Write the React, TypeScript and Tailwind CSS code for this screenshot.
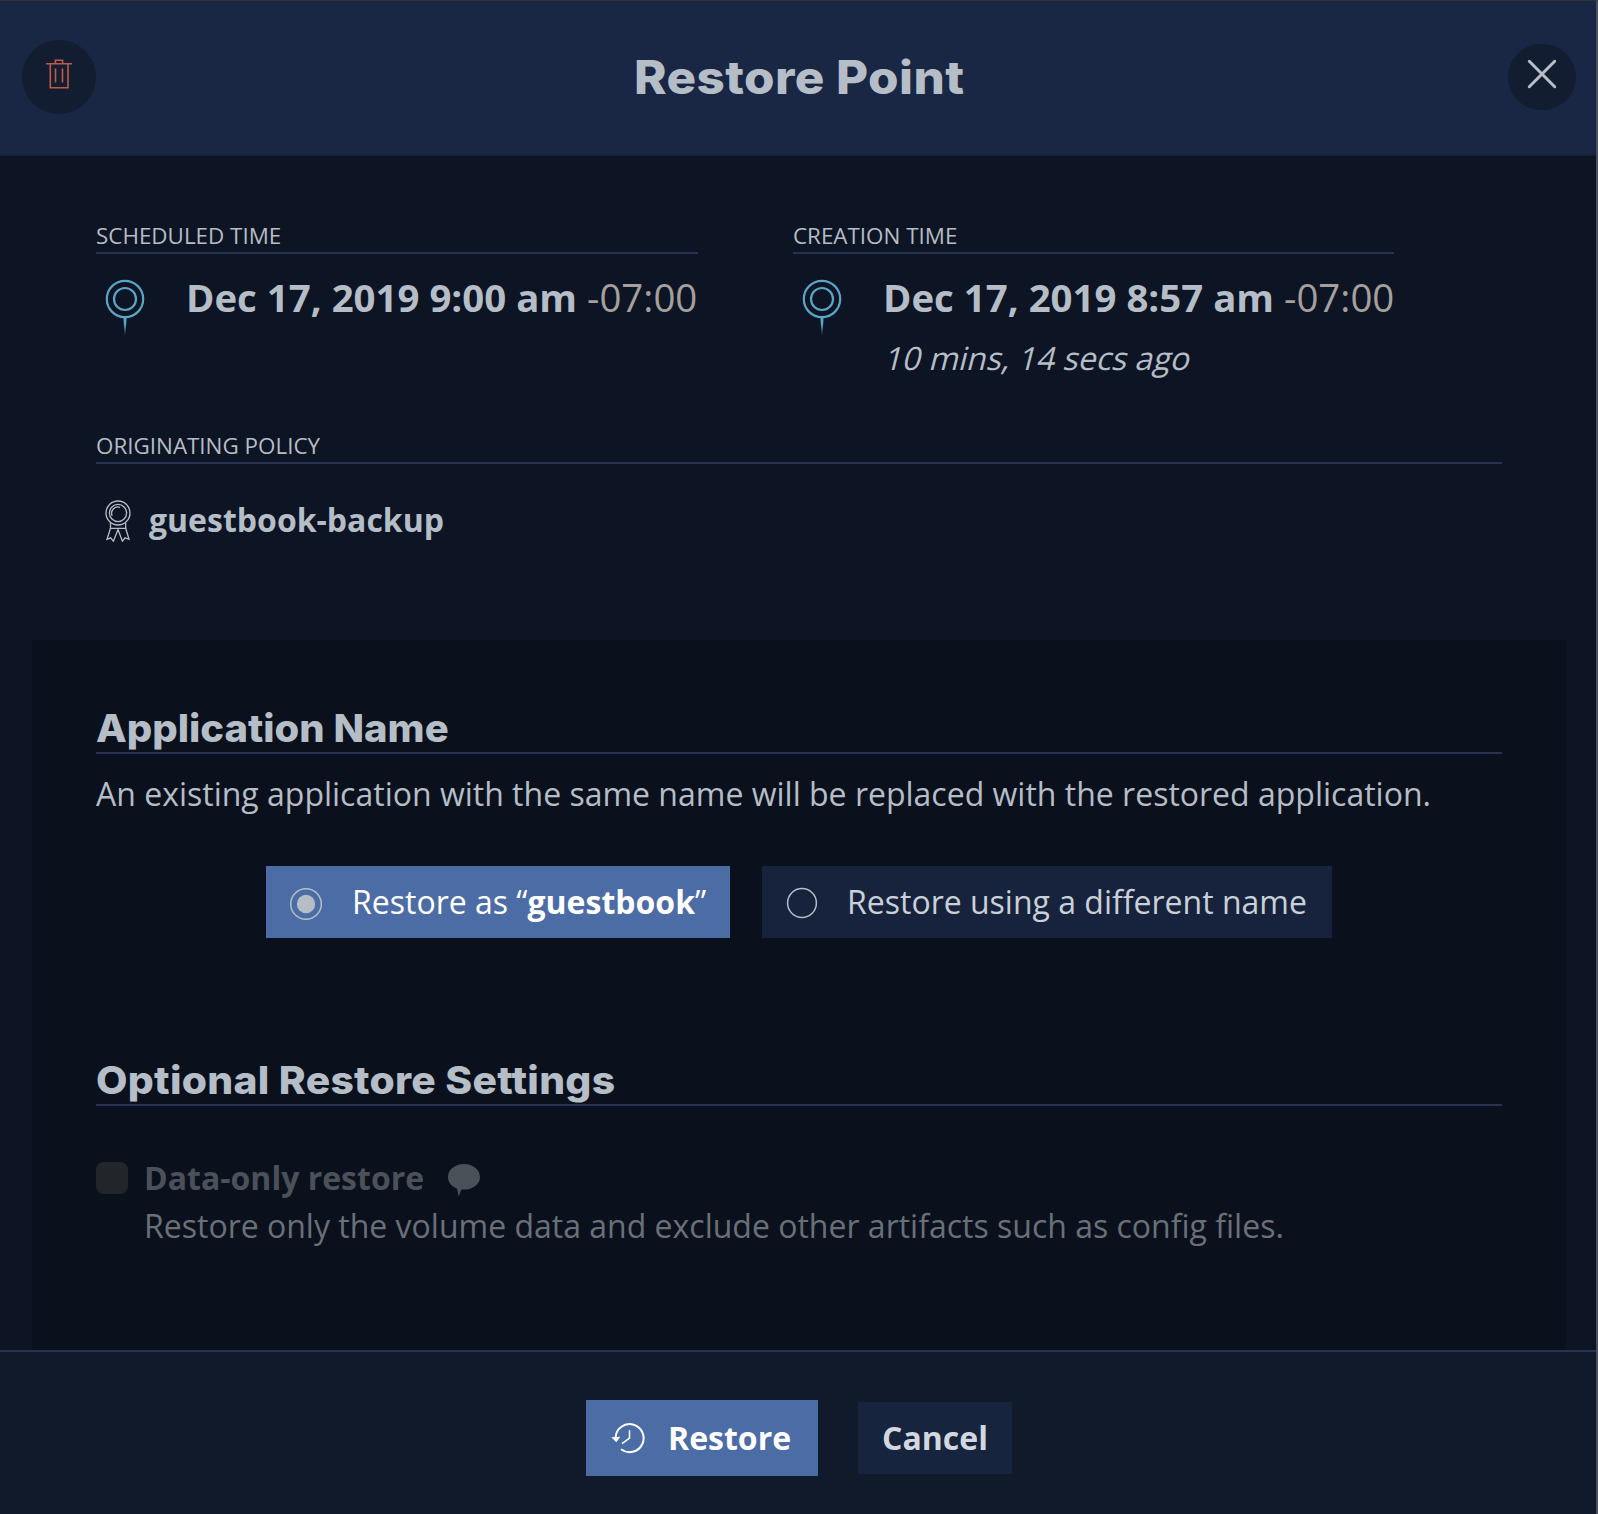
import React from "react";

function TrashIcon() {
  return (
    <svg width="26" height="30" viewBox="0 0 26 30" fill="none" stroke="#c05a48" strokeWidth="1.6">
      <path d="M0 4.7H26M9.4 4.5V1.2H16.6V4.5M4.3 4.7V28.8H22V4.7" />
      <path d="M9.5 9.5V23.5M16.5 9.5V23.5" />
    </svg>
  );
}

function CloseIcon() {
  return (
    <svg width="30" height="30" viewBox="0 0 30 30" stroke="#b9bec9" strokeWidth="3" strokeLinecap="round">
      <path d="M2.3 2.3L27.7 27.7M27.7 2.3L2.3 27.7" />
    </svg>
  );
}

function PinIcon({ id }: { id: string }) {
  return (
    <svg width="40" height="58" viewBox="0 0 40 58" fill="none" className="block">
      <defs>
        <linearGradient id={id} x1="0" y1="37" x2="0" y2="57" gradientUnits="userSpaceOnUse">
          <stop offset="0" stopColor="#5ba6c6" />
          <stop offset="0.4" stopColor="#5ba6c6" />
          <stop offset="1" stopColor="#5ba6c6" stopOpacity="0" />
        </linearGradient>
      </defs>
      <circle cx="20" cy="20" r="18.2" stroke="#5ba6c6" strokeWidth="2.2" />
      <circle cx="20" cy="20" r="11" stroke="#5ba6c6" strokeWidth="2.2" />
      <path d="M18.4 37.5H21.6L20.5 57H19.5Z" fill={`url(#${id})`} />
    </svg>
  );
}

function RibbonIcon() {
  return (
    <svg width="26" height="42" viewBox="0 0 26 42" fill="none" stroke="#b5bdc6" strokeWidth="1.3">
      <circle cx="13" cy="13" r="12" />
      <circle cx="13" cy="13" r="8.6" />
      <path d="M7.2 15.8A6.2 6.2 0 0 1 15 7.4" />
      <path d="M5.5 23V28.3H20.7V23" />
      <path d="M5.5 28.3L2 39.3L5.6 37.8L8.4 41.2L13 29.5L17.4 41.2L20 37.8L24 39.3L20.7 28.3" />
    </svg>
  );
}

function BubbleIcon() {
  return (
    <svg width="32" height="33" viewBox="0 0 32 33" fill="#4a5159" className="block">
      <path d="M16 0C24.8 0 32 5.6 32 12.9S24.8 25.6 16 25.6C15 25.6 14.2 25.6 13.4 25.4L10.7 32.5L9 24.4C3.6 22.4 0 18.2 0 12.9C0 5.6 7.2 0 16 0Z" />
    </svg>
  );
}

function RadioIcon({ checked }: { checked?: boolean }) {
  return (
    <svg width="32" height="32" viewBox="0 0 32 32" fill="none" className="block shrink-0">
      <circle cx="16" cy="16" r={checked ? 15.3 : 14.4} stroke="#b5bdc6" strokeWidth="1.5" />
      {checked && <circle cx="16" cy="16" r="9.2" fill="#b5bdc6" />}
    </svg>
  );
}

function RestoreIcon() {
  return (
    <svg width="34" height="32" viewBox="0 0 34 32" fill="none" stroke="#ffffff" className="block">
      <path d="M4.6 15.8A14 14 0 1 1 10 27.2" strokeWidth="2" />
      <path d="M18.5 8.3V16L11 21.6" strokeWidth="1.5" />
      <path d="M0.3 15.2L9.3 14.8L5.3 20.3Z" fill="#ffffff" stroke="none" />
    </svg>
  );
}

function Label({ children }: { children: React.ReactNode }) {
  return (
    <div className="h-[34px] border-b-2 border-[#283353] text-[22.4px] leading-8 whitespace-nowrap">{children}</div>
  );
}

function Heading({ children }: { children: React.ReactNode }) {
  return (
    <div className="h-[50px] border-b-2 border-[#283353] font-[Inter] text-[38.5px] leading-[48px] font-extrabold whitespace-nowrap">
      {children}
    </div>
  );
}

function TimeBlock({ id, label, date, ago }: { id: string; label: string; date: string; ago?: string }) {
  return (
    <section>
      <Label>{label}</Label>
      <div className="flex pt-3">
        <div className="w-[90px] shrink-0 pt-[13px] pl-[9px]">
          <PinIcon id={id} />
        </div>
        <div className="whitespace-nowrap">
          <div className="text-[38.4px] leading-[62px] font-bold">
            {date} <span className="font-normal text-[#a5a09d]">-07:00</span>
          </div>
          {ago && (
            <div className="mt-[6px] w-fit origin-[0_36px] skew-x-[-14deg] text-[32px] leading-[48px]">{ago}</div>
          )}
        </div>
      </div>
    </section>
  );
}

export default function App() {
  return (
    <div className="flex h-[1514px] w-[1598px] flex-col overflow-hidden border-t border-r-2 border-t-[#333333] border-r-[#4a505d] bg-[#0d1423] font-['Open_Sans',sans-serif] text-[#b5bdc6]">
      <header className="flex h-[155px] shrink-0 items-center justify-between border-b-2 border-[#15203b] bg-[#192745] pr-5 pb-[2px] pl-[22px]">
        <button className="flex size-[74px] items-center justify-center rounded-full bg-[#131d32] pb-[6px]">
          <TrashIcon />
        </button>
        <h1 className="mr-[5px] scale-x-[1.072] font-[Inter] text-[46px] leading-[60px] font-extrabold tracking-[0.4px] whitespace-nowrap">
          Restore Point
        </h1>
        <button className="flex h-[66px] w-[68px] items-center justify-center rounded-full bg-[#131d32] pb-[6px]">
          <CloseIcon />
        </button>
      </header>

      <main className="flex min-h-0 flex-1 flex-col pt-16">
        <div className="grid grid-cols-[602px_601px] gap-x-[95px] px-24">
          <TimeBlock id="pin-scheduled" label="SCHEDULED TIME" date="Dec 17, 2019 9:00 am" />
          <TimeBlock id="pin-created" label="CREATION TIME" date="Dec 17, 2019 8:57 am" ago="10 mins, 14 secs ago" />
        </div>

        <section className="mt-12 mr-[94px] ml-24">
          <Label>ORIGINATING POLICY</Label>
          <div className="flex pt-8">
            <div className="w-[53px] pt-1 pl-[9px]">
              <RibbonIcon />
            </div>
            <span className="text-[32px] leading-[48px] font-bold">guestbook-backup</span>
          </div>
        </section>

        <div className="mt-24 mr-[30px] ml-8 flex-1 bg-[#0a111d] px-16 pt-16">
          <Heading>
            <h2 className="w-fit origin-left scale-x-[1.038]">Application Name</h2>
          </Heading>
          <p className="mt-4 text-[32px] leading-[48px] whitespace-nowrap">
            An existing application with the same name will be replaced with the restored application.
          </p>
          <div className="mt-12 flex justify-center gap-8">
            <label className="flex h-[72px] w-[464px] items-center bg-[#4c6ca5] pl-6 text-[32px] whitespace-nowrap text-white">
              <span className="mt-1">
                <RadioIcon checked />
              </span>
              <span className="ml-[30px]">
                Restore as “<b>guestbook</b>”
              </span>
            </label>
            <label className="flex h-[72px] w-[570px] items-center bg-[#17233d] pl-6 text-[32px] whitespace-nowrap text-[#c9d0d8]">
              <span className="mt-[2px]">
                <RadioIcon />
              </span>
              <span className="ml-[29px]">Restore using a different name</span>
            </label>
          </div>

          <div className="mt-[118px]">
            <Heading>
              <h2 className="w-fit origin-left scale-x-[1.06] tracking-[0.25px]">Optional Restore Settings</h2>
            </Heading>
          </div>
          <div className="mt-12 flex gap-4">
            <span className="mt-2 size-8 rounded-lg bg-[#222529]" />
            <div className="text-[32px] leading-[48px] whitespace-nowrap">
              <div className="flex h-12 items-center gap-6 font-bold text-[#4a5159]">
                Data-only restore
                <span className="pt-[5px]">
                  <BubbleIcon />
                </span>
              </div>
              <p className="text-[#6a7077]">
                Restore only the volume data and exclude other artifacts such as config files.
              </p>
            </div>
          </div>
        </div>
      </main>

      <footer className="flex h-[164px] shrink-0 items-start justify-center gap-10 border-t-2 border-[#283353] bg-[#111a2b] pt-12 pl-[2px] text-[32px] font-bold">
        <button className="flex h-[76px] w-[232px] items-center bg-[#4c6ca5] pl-[25px] text-white">
          <RestoreIcon />
          <span className="ml-[23px]">Restore</span>
        </button>
        <button className="mt-[2px] h-[72px] w-[154px] bg-[#17243d] text-[#d3d7df]">Cancel</button>
      </footer>
    </div>
  );
}
